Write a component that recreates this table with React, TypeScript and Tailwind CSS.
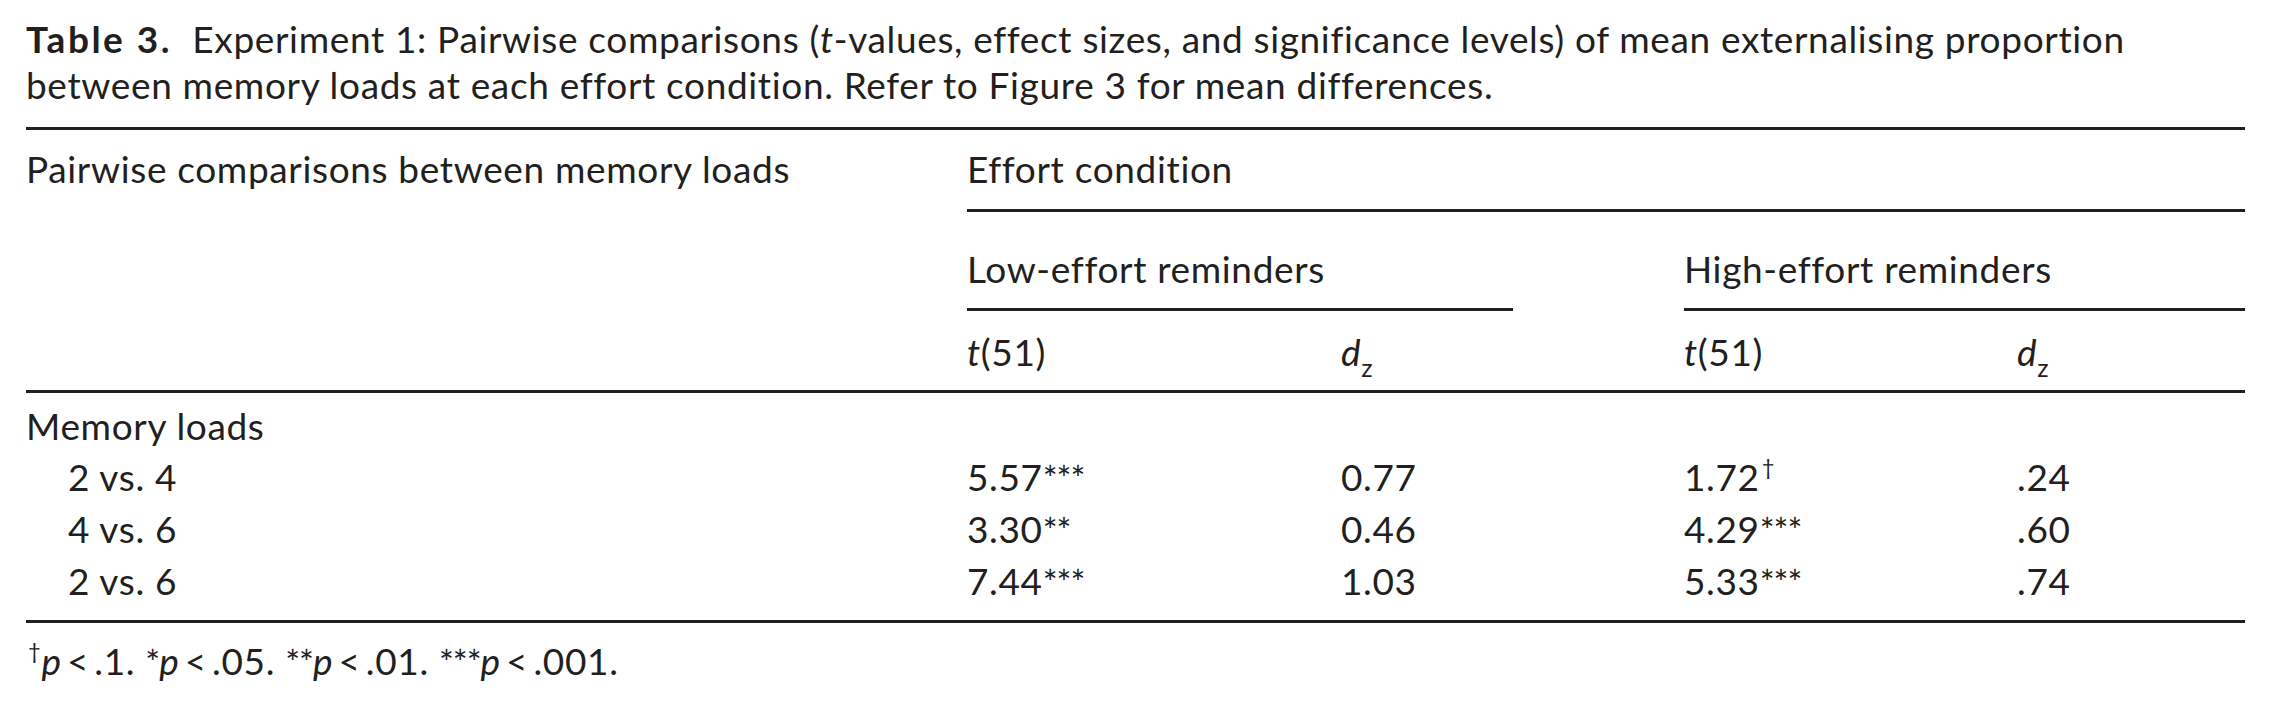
const font = { fontFamily: "Lato, 'Liberation Sans', sans-serif" };

function Rule({ className = "" }: { className?: string }) {
  return <div className={"h-[3px] bg-[#231f20] " + className} />;
}

function Stars({ n }: { n: string }) {
  return <span className="text-[35px] tracking-[-1px]">{n}</span>;
}

function Dagger() {
  return <sup className="text-[22px] top-[-0.75em] ml-[2px]">†</sup>;
}

function Dz() {
  return (
    <span>
      <i>d</i>
      <sub className="text-[25px] top-[0.45em]">z</sub>
    </span>
  );
}

function T51() {
  return (
    <span>
      <i>t</i>(51)
    </span>
  );
}

const rows = [
  { label: "2 vs. 4", lt: "5.57", ls: "***", ld: "0.77", ht: "1.72", hs: "", hd: ".24" },
  { label: "4 vs. 6", lt: "3.30", ls: "**", ld: "0.46", ht: "4.29", hs: "***", hd: ".60" },
  { label: "2 vs. 6", lt: "7.44", ls: "***", ld: "1.03", ht: "5.33", hs: "***", hd: ".74" },
];

export default function App() {
  return (
    <div
      className="w-[2271px] h-[711px] bg-white text-[#231f20] text-[37px] tracking-[0.65px] pl-[26px] pr-[26px] overflow-hidden"
      style={font}
    >
      {/* Caption */}
      <div className="pt-[16px] leading-[46px]">
        <p>
          <b className="tracking-[2.5px]">Table 3.</b>&nbsp; Experiment 1: Pairwise comparisons (<i>t</i>-values,
          effect sizes, and significance levels) of mean externalising proportion
        </p>
        <p>between memory loads at each effort condition. Refer to Figure 3 for mean differences.</p>
      </div>

      <Rule className="mt-[19px]" />

      <div className="grid grid-cols-[941px_374px_343px_333px_228px] leading-[44px]">
        {/* Header: column stub + Effort condition */}
        <div className="pt-[17px]">Pairwise comparisons between memory loads</div>
        <div className="col-span-4 flex flex-col">
          <div className="pt-[17px] pb-[18px]">Effort condition</div>
          <Rule />
        </div>

        {/* Low / High effort */}
        <div />
        <div className="col-span-2 flex flex-col">
          <div className="pt-[35px] pb-[17px]">Low-effort reminders</div>
          <Rule className="mr-[171px]" />
        </div>
        <div className="col-span-2 flex flex-col">
          <div className="pt-[35px] pb-[17px]">High-effort reminders</div>
          <Rule />
        </div>

        {/* Statistic labels */}
        <div />
        <div className="pt-[19px] pb-[16px]">
          <T51 />
        </div>
        <div className="pt-[19px] pb-[16px]">
          <Dz />
        </div>
        <div className="pt-[19px] pb-[16px]">
          <T51 />
        </div>
        <div className="pt-[19px] pb-[16px]">
          <Dz />
        </div>
      </div>

      <Rule />

      <div className="grid grid-cols-[941px_374px_343px_333px_228px] leading-[51px] pt-[7px]">
        <div className="col-span-5">Memory loads</div>
        {rows.map((r) => (
          <div key={r.label} className="contents">
            <div className="pl-[42px]">{r.label}</div>
            <div>
              {r.lt}
              <Stars n={r.ls} />
            </div>
            <div>{r.ld}</div>
            <div>
              {r.ht}
              {r.hs ? <Stars n={r.hs} /> : <Dagger />}
            </div>
            <div>{r.hd}</div>
          </div>
        ))}
      </div>

      <Rule className="mt-[13px]" />

      {/* Footnote */}
      <p className="mt-[16px] leading-[44px]">
        <Dagger />
        <i>p</i>&thinsp;&lt;&thinsp;.1. <Stars n="*" />
        <i>p</i>&thinsp;&lt;&thinsp;.05. <Stars n="**" />
        <i>p</i>&thinsp;&lt;&thinsp;.01. <Stars n="***" />
        <i>p</i>&thinsp;&lt;&thinsp;.001.
      </p>
    </div>
  );
}
